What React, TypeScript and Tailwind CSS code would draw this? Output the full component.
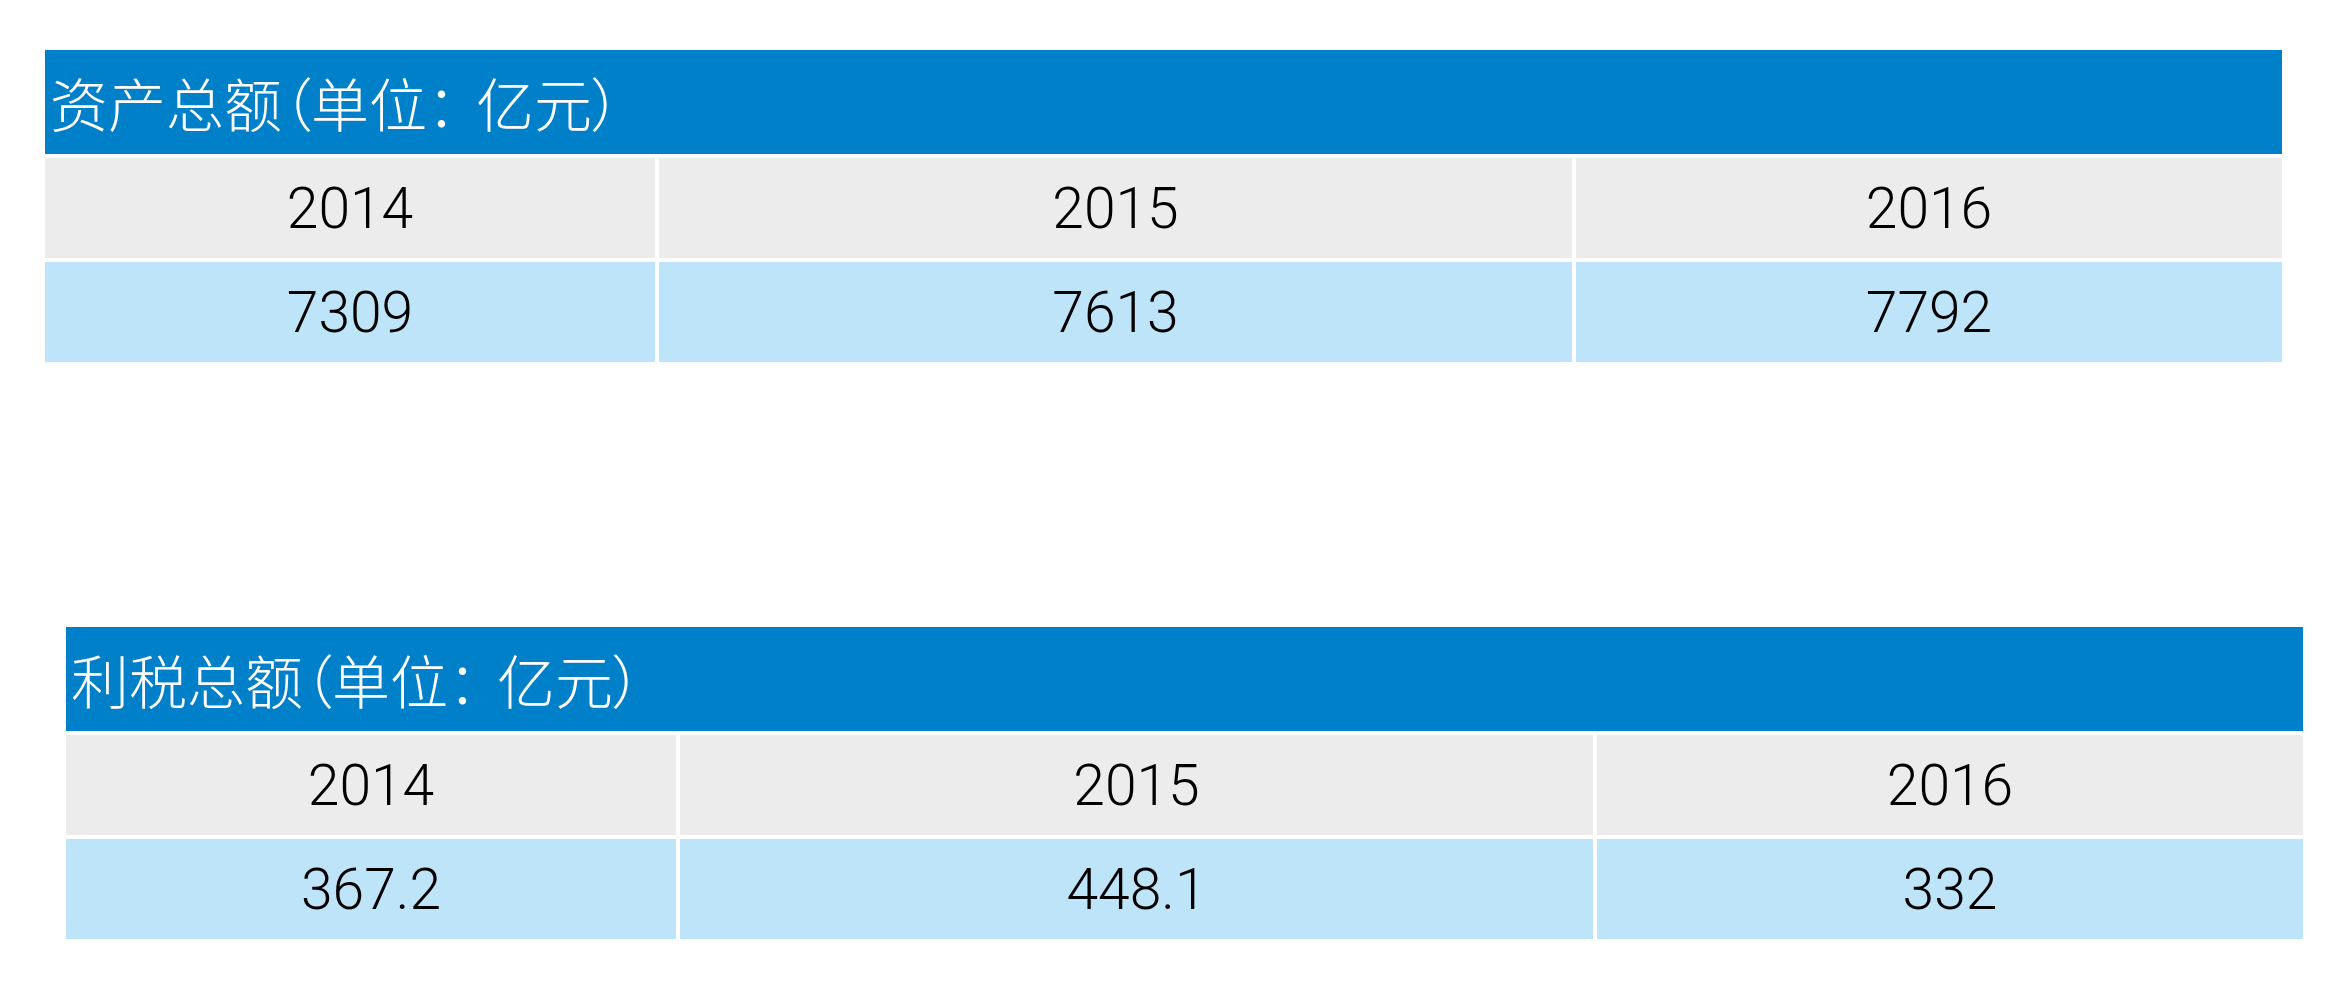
import React from "react";

type TableProps = {
  label: string;
  years: string[];
  values: string[];
  className: string;
};

function DataTable({ label, years, values, className }: TableProps) {
  const rows = [
    { cells: years, bg: "bg-[#ececec]" },
    { cells: values, bg: "bg-[#bde4f9]" },
  ];
  return (
    <div className={"flex w-[2237px] flex-col gap-[4px] " + className}>
      <div className="flex h-[104px] items-center bg-[#0180ca] pl-[5px]">
        <span
          className="text-[58px] font-light leading-none text-white [font-feature-settings:'palt']"
          style={{ fontFamily: '"Noto Sans CJK SC", "Noto Sans", sans-serif' }}
        >
          {label}（单位<span className="pr-[20px]">：</span>亿元）
        </span>
      </div>
      {rows.map((row, ri) => (
        <div key={ri} className="grid h-[100px] grid-cols-[610px_913px_706px] gap-x-[4px]">
          {row.cells.map((c, ci) => (
            <div key={ci} className={"flex items-center justify-center " + row.bg}>
              <span
                className="text-[57px] font-light leading-none text-black"
                style={{ fontFamily: 'Roboto, "Liberation Sans", sans-serif' }}
              >
                {c}
              </span>
            </div>
          ))}
        </div>
      ))}
    </div>
  );
}

export default function App() {
  return (
    <div className="h-[982px] w-[2328px] overflow-hidden bg-white pt-[50px]">
      <DataTable
        label="资产总额"
        years={["2014", "2015", "2016"]}
        values={["7309", "7613", "7792"]}
        className="ml-[45px]"
      />
      <DataTable
        label="利税总额"
        years={["2014", "2015", "2016"]}
        values={["367.2", "448.1", "332"]}
        className="ml-[66px] mt-[265px]"
      />
    </div>
  );
}
